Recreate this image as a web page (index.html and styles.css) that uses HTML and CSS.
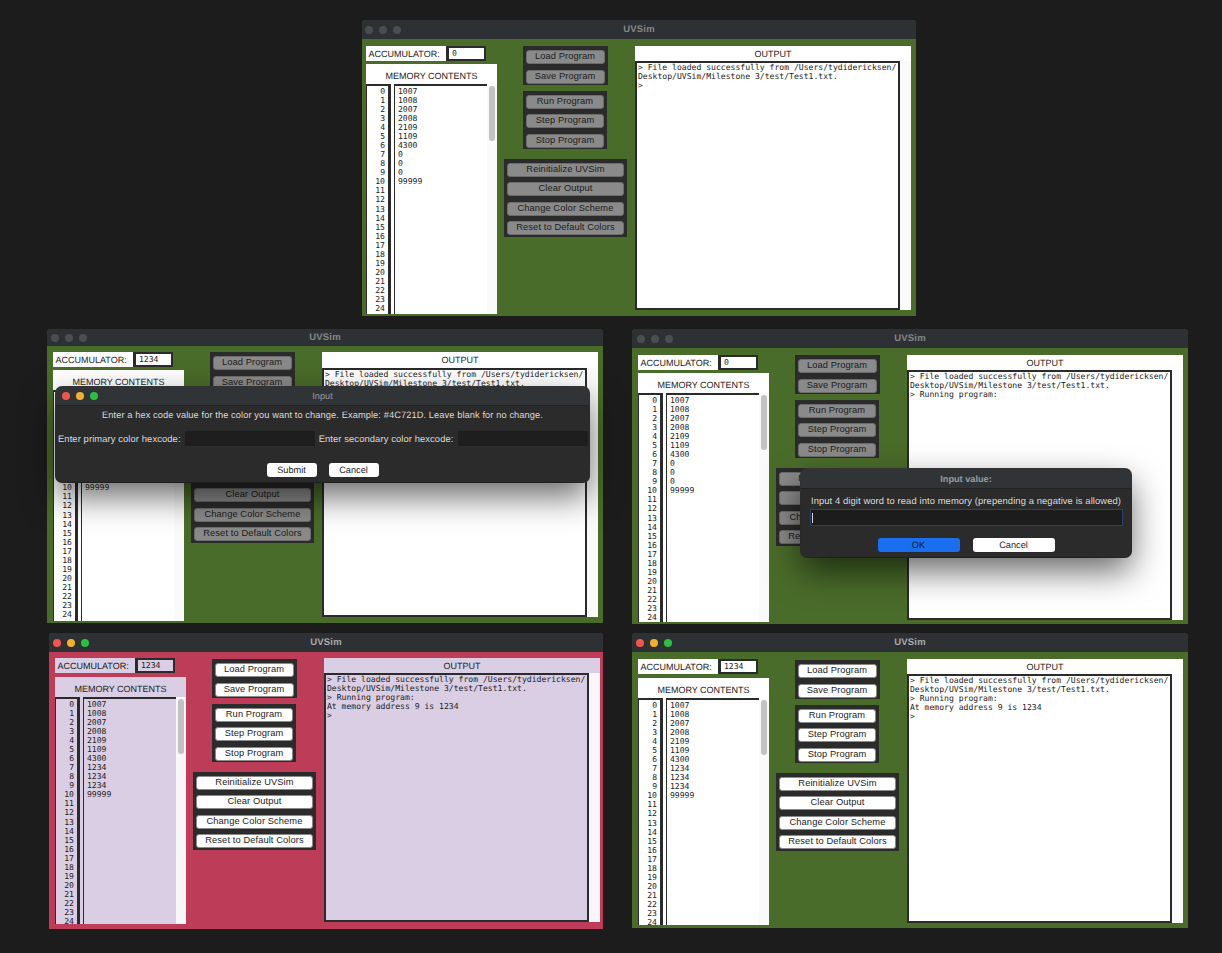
FILE: index.html
```html
<!DOCTYPE html>
<html lang="en">
<head>
<meta charset="utf-8">
<title>UVSim</title>
<link rel="stylesheet" href="styles.css">
</head>
<body>
<main class="desktop">

<section class="win win-a idle">
<header class="titlebar"><span class="lights"><i></i><i></i><i></i></span><h1>UVSim</h1></header>
<div class="body">
<div class="left">
<div class="acc"><span class="acc-label">ACCUMULATOR:</span><span class="acc-value">0</span></div>
<div class="mem"><h2>MEMORY CONTENTS</h2><div class="mem-table"><div class="nums">0
1
2
3
4
5
6
7
8
9
10
11
12
13
14
15
16
17
18
19
20
21
22
23
24</div><div class="vals">1007
1008
2007
2008
2109
1109
4300
0
0
0
99999</div><div class="track"><i class="thumb"></i></div></div></div>
</div>
<div class="mid">
<div class="group g1"><button>Load Program</button><button>Save Program</button></div>
<div class="group g2"><button>Run Program</button><button>Step Program</button><button>Stop Program</button></div>
<div class="group g3"><button>Reinitialize UVSim</button><button>Clear Output</button><button>Change Color Scheme</button><button>Reset to Default Colors</button></div>
</div>
<div class="out"><h2>OUTPUT</h2><div class="out-row"><div class="console">&gt; File loaded successfully from /Users/tydidericksen/
Desktop/UVSim/Milestone 3/test/Test1.txt.
&gt;</div><div class="out-track"></div></div></div>
</div>
</section>

<section class="win win-b idle">
<header class="titlebar"><span class="lights"><i></i><i></i><i></i></span><h1>UVSim</h1></header>
<div class="body">
<div class="left">
<div class="acc"><span class="acc-label">ACCUMULATOR:</span><span class="acc-value">1234</span></div>
<div class="mem"><h2>MEMORY CONTENTS</h2><div class="mem-table"><div class="nums">0
1
2
3
4
5
6
7
8
9
10
11
12
13
14
15
16
17
18
19
20
21
22
23
24</div><div class="vals">1007
1008
2007
2008
2109
1109
4300
0
0
0
99999</div><div class="track"><i class="thumb"></i></div></div></div>
</div>
<div class="mid">
<div class="group g1"><button>Load Program</button><button>Save Program</button></div>
<div class="group g2"><button>Run Program</button><button>Step Program</button><button>Stop Program</button></div>
<div class="group g3"><button>Reinitialize UVSim</button><button>Clear Output</button><button>Change Color Scheme</button><button>Reset to Default Colors</button></div>
</div>
<div class="out"><h2>OUTPUT</h2><div class="out-row"><div class="console">&gt; File loaded successfully from /Users/tydidericksen/
Desktop/UVSim/Milestone 3/test/Test1.txt.
&gt;</div><div class="out-track"></div></div></div>
</div>
</section>

<section class="win win-c idle">
<header class="titlebar"><span class="lights"><i></i><i></i><i></i></span><h1>UVSim</h1></header>
<div class="body">
<div class="left">
<div class="acc"><span class="acc-label">ACCUMULATOR:</span><span class="acc-value">0</span></div>
<div class="mem"><h2>MEMORY CONTENTS</h2><div class="mem-table"><div class="nums">0
1
2
3
4
5
6
7
8
9
10
11
12
13
14
15
16
17
18
19
20
21
22
23
24</div><div class="vals">1007
1008
2007
2008
2109
1109
4300
0
0
0
99999</div><div class="track"><i class="thumb"></i></div></div></div>
</div>
<div class="mid">
<div class="group g1"><button>Load Program</button><button>Save Program</button></div>
<div class="group g2"><button>Run Program</button><button>Step Program</button><button>Stop Program</button></div>
<div class="group g3"><button>Reinitialize UVSim</button><button>Clear Output</button><button>Change Color Scheme</button><button>Reset to Default Colors</button></div>
</div>
<div class="out"><h2>OUTPUT</h2><div class="out-row"><div class="console">&gt; File loaded successfully from /Users/tydidericksen/
Desktop/UVSim/Milestone 3/test/Test1.txt.
&gt; Running program:</div><div class="out-track"></div></div></div>
</div>
</section>

<section class="win win-d active pink">
<header class="titlebar"><span class="lights"><i></i><i></i><i></i></span><h1>UVSim</h1></header>
<div class="body">
<div class="left">
<div class="acc"><span class="acc-label">ACCUMULATOR:</span><span class="acc-value">1234</span></div>
<div class="mem"><h2>MEMORY CONTENTS</h2><div class="mem-table"><div class="nums">0
1
2
3
4
5
6
7
8
9
10
11
12
13
14
15
16
17
18
19
20
21
22
23
24</div><div class="vals">1007
1008
2007
2008
2109
1109
4300
1234
1234
1234
99999</div><div class="track"><i class="thumb"></i></div></div></div>
</div>
<div class="mid">
<div class="group g1"><button>Load Program</button><button>Save Program</button></div>
<div class="group g2"><button>Run Program</button><button>Step Program</button><button>Stop Program</button></div>
<div class="group g3"><button>Reinitialize UVSim</button><button>Clear Output</button><button>Change Color Scheme</button><button>Reset to Default Colors</button></div>
</div>
<div class="out"><h2>OUTPUT</h2><div class="out-row"><div class="console">&gt; File loaded successfully from /Users/tydidericksen/
Desktop/UVSim/Milestone 3/test/Test1.txt.
&gt; Running program:
At memory address 9 is 1234
&gt;</div><div class="out-track"></div></div></div>
</div>
</section>

<section class="win win-e active">
<header class="titlebar"><span class="lights"><i></i><i></i><i></i></span><h1>UVSim</h1></header>
<div class="body">
<div class="left">
<div class="acc"><span class="acc-label">ACCUMULATOR:</span><span class="acc-value">1234</span></div>
<div class="mem"><h2>MEMORY CONTENTS</h2><div class="mem-table"><div class="nums">0
1
2
3
4
5
6
7
8
9
10
11
12
13
14
15
16
17
18
19
20
21
22
23
24</div><div class="vals">1007
1008
2007
2008
2109
1109
4300
1234
1234
1234
99999</div><div class="track"><i class="thumb"></i></div></div></div>
</div>
<div class="mid">
<div class="group g1"><button>Load Program</button><button>Save Program</button></div>
<div class="group g2"><button>Run Program</button><button>Step Program</button><button>Stop Program</button></div>
<div class="group g3"><button>Reinitialize UVSim</button><button>Clear Output</button><button>Change Color Scheme</button><button>Reset to Default Colors</button></div>
</div>
<div class="out"><h2>OUTPUT</h2><div class="out-row"><div class="console">&gt; File loaded successfully from /Users/tydidericksen/
Desktop/UVSim/Milestone 3/test/Test1.txt.
&gt; Running program:
At memory address 9 is 1234
&gt;</div><div class="out-track"></div></div></div>
</div>
</section>

<section class="dialog dialog-hex">
<header class="dialog-bar"><span class="lights"><i></i><i></i><i></i></span><h3>Input</h3></header>
<p class="dialog-text">Enter a hex code value for the color you want to change. Example: #4C721D. Leave blank for no change.</p>
<div class="hex-row"><label>Enter primary color hexcode:</label><span class="field"></span><label>Enter secondary color hexcode:</label><span class="field"></span></div>
<div class="dialog-actions"><span class="pill">Submit</span><span class="pill">Cancel</span></div>
</section>

<section class="dialog dialog-value">
<header class="dialog-bar"><h3 class="bold">Input value:</h3></header>
<p class="dialog-text">Input 4 digit word to read into memory (prepending a negative is allowed)</p>
<div class="value-field"><i class="caret"></i></div>
<div class="dialog-actions wide"><span class="pill primary">OK</span><span class="pill">Cancel</span></div>
</section>

</main>
</body>
</html>
```
FILE: styles.css
```css
* { box-sizing: border-box; }
html, body { margin: 0; height: 953px; overflow: hidden; background: #1c1c1c; }
body { font-family: "Liberation Sans", Arial, sans-serif; color: #1c1c1c; text-rendering: geometricPrecision; }
.desktop { position: relative; width: 1222px; height: 953px; }

.win {
  position: absolute;
  --green: #4a6c2a; --panel: #fff; --track: #fafafa;
  --btn: #fff; --btn-edge: #8a8a8a;
  --lights: 4px; --left-gap: 3px; --mem-bottom: 2px; --out-h: 265px; --out-head: 15px; --mid-top: 0px;
  display: flex; flex-direction: column;
  background: var(--green);
  border-radius: 4px 4px 0 0;
  overflow: hidden;
}
.win.pink { --green: #bd3c58; --panel: #d9cee3; --track: #f7f6f8; }
.win.idle { --btn: #8a8a8a; --btn-edge: #6c6c6c; }

.win-a { left: 362px; top: 20px; width: 554px; height: 296px; --title: 19px; --pad-top: 7px; --pad-left: 4px; --lights: 3px; --out-h: 264px; }
.win-b { left: 47px; top: 329px; width: 556px; height: 294px; --title: 17px; --pad-top: 6px; --pad-left: 6px; --out-head: 16px; }
.win-c { left: 632px; top: 329px; width: 556px; height: 295px; --title: 19px; --pad-top: 7px; --pad-left: 6px; --lights: 5px; }
.win-d { left: 49px; top: 633px; width: 554px; height: 296px; --title: 19px; --pad-top: 6px; --pad-left: 6px; --left-gap: 4px; --mem-bottom: 5px; --out-h: 264px; --mid-top: 1px; }
.win-e { left: 632px; top: 633px; width: 556px; height: 295px; --title: 19px; --pad-top: 7px; --pad-left: 6px; --left-gap: 4px; --mem-bottom: 3px; --out-h: 264px; --mid-top: 1px; }

.titlebar {
  position: relative; flex: none; height: var(--title); padding-bottom: 1px;
  background: #2e3133; display: flex; align-items: center; justify-content: center;
}
.titlebar h1 { margin: 0; font-size: 9.5px; font-weight: 700; letter-spacing: .2px; color: #85888a; }
.active .titlebar h1 { color: #a9abad; }

.lights { position: absolute; left: var(--lights); top: 50%; transform: translateY(-50%); display: flex; gap: 6px; }
.lights i { display: block; width: 8px; height: 8px; border-radius: 50%; background: #4b4e50; }
.active .lights i:nth-child(1), .dialog-hex .lights i:nth-child(1) { background: #f0564e; }
.active .lights i:nth-child(2), .dialog-hex .lights i:nth-child(2) { background: #f2b031; }
.active .lights i:nth-child(3), .dialog-hex .lights i:nth-child(3) { background: #2bc13f; }

.body { flex: 1; min-height: 0; display: flex; padding: var(--pad-top) 0 0 var(--pad-left); }
.left { flex: none; width: 131px; display: flex; flex-direction: column; gap: var(--left-gap); }
.mid { flex: none; width: 138px; padding: var(--mid-top) 2px 0 0; display: flex; flex-direction: column; align-items: center; }
.out { flex: none; width: 276px; height: var(--out-h); display: flex; flex-direction: column; background: var(--panel); }

.acc { display: flex; height: 15px; }
.acc-label {
  width: 80px; background: var(--panel); font-size: 9px; padding-left: 2.5px;
  line-height: 16px; white-space: nowrap;
}
.acc-value {
  width: 40px; background: var(--panel); border: 2.5px solid #2b2b2b; border-left-width: 3px;
  font: 8.1px/10px "DejaVu Sans Mono", monospace; padding: 0 3px;
}

.mem { flex: 1; min-height: 0; margin-bottom: var(--mem-bottom); background: var(--panel); display: flex; flex-direction: column; overflow: hidden; }
.mem h2, .out h2 { margin: 0; font-weight: 400; font-size: 9px; text-align: center; }
.mem h2 { flex: none; height: 20px; line-height: 25px; }
.out h2 { flex: none; height: var(--out-head); line-height: 17px; }

.mem-table { flex: 1; min-height: 0; display: flex; overflow: hidden; }
.nums, .vals {
  font: 8.1px/9.08px "DejaVu Sans Mono", monospace; white-space: pre-line;
  padding-top: .5px; border-top: 2px solid #2b2b2b;
}
.nums { flex: none; width: 25px; border-left: 1px solid #2b2b2b; border-right: 3px solid #2b2b2b; text-align: right; padding-right: 3px; }
.vals { flex: 1; margin-left: 3px; padding-left: 3px; border-left: 1px solid #2b2b2b; }
.track { flex: none; width: 10px; background: var(--track); padding: 2px 2px 0; }
.thumb { display: block; width: 6px; height: 55px; border-radius: 3px; background: #c2c2c2; }

.group { background: #2b2b2b; display: flex; flex-direction: column; gap: 5.5px; padding: 4px 3px 1.5px; }
.group button {
  display: block; height: 14px; padding: 0 0 2px; margin: 0;
  border: 1px solid var(--btn-edge); border-radius: 3px; background: var(--btn);
  font: 9.3px/11px "Liberation Sans", Arial, sans-serif; letter-spacing: .1px; color: #1c1c1c; white-space: nowrap;
}
.g1 { width: 85px; }
.g2 { width: 84px; margin-top: 5.5px; }
.g3 { width: 123px; margin: 9.5px 0 0 1px; }

.out-row { flex: 1; min-height: 0; display: flex; }
.console {
  flex: 1; border: 2px solid #2b2b2b;
  font: 8.1px/9.08px "DejaVu Sans Mono", monospace; white-space: pre-line; padding: 0 0 0 1px; overflow: hidden;
}
.out-track { flex: none; width: 11px; background: var(--track); }

.dialog {
  position: absolute; background: #2b2b2b; border-radius: 6px; color: #dcdcdc;
  box-shadow: 0 14px 34px rgba(0,0,0,.6), 0 0 0 1px #3a3a3a;
  display: flex; flex-direction: column; align-items: center;
}
.dialog-bar {
  position: relative; align-self: stretch; height: 19px; background: #303436; flex: none;
  border-radius: 6px 6px 0 0; border-bottom: 1px solid #222;
  display: flex; align-items: center; justify-content: center;
}
.dialog-bar h3 { margin: 0; font-size: 9.2px; font-weight: 400; color: #9a9c9e; }
.dialog-bar h3.bold { font-weight: 700; }
.dialog-bar .lights { left: 6px; gap: 6px; }
.dialog-text { margin: 0; font-size: 9.4px; letter-spacing: .1px; white-space: nowrap; }
.dialog-hex { left: 56px; top: 387px; width: 533px; height: 95px; }
.dialog-hex .dialog-text { margin-top: 4px; line-height: 10px; font-size: 9.25px; }
.hex-row { align-self: stretch; display: flex; align-items: center; margin-top: 11px; padding-left: 2px; font-size: 9.4px; letter-spacing: .1px; }
.hex-row label { white-space: nowrap; }
.field { flex: none; width: 130px; height: 15px; background: #1e1e1e; margin: 0 4px; }
.dialog-actions { display: flex; gap: 12px; margin-top: 17px; }
.pill {
  display: block; width: 50px; height: 14px; border-radius: 3px; background: #fff; color: #1c1c1c;
  font-size: 9.2px; line-height: 14px; text-align: center;
}
.dialog-value { left: 801px; top: 469px; width: 330px; height: 88px; }
.dialog-value .dialog-bar { height: 20px; }
.dialog-value .dialog-text { margin-top: 7px; line-height: 10px; }
.value-field { width: 313px; height: 17px; margin-top: 3px; background: #1c1c1c; border: 1px solid #27456b; padding: 3px 1px; }
.caret { display: block; width: 1px; height: 10px; background: #d8d8d8; }
.dialog-actions.wide { gap: 13px; margin-top: 12px; }
.wide .pill { width: 82px; }
.pill.primary { background: #1a6ff0; }
```
